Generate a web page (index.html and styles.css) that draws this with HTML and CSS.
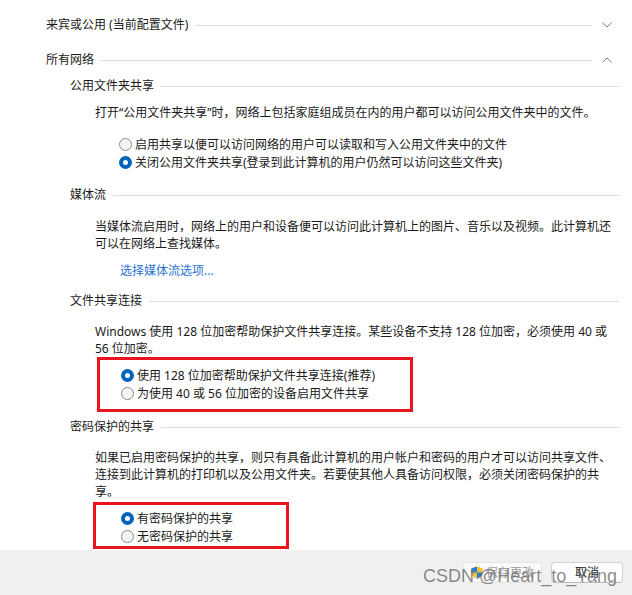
FILE: index.html
```html
<!DOCTYPE html>
<html lang="zh-CN">
<head>
<meta charset="utf-8">
<title>高级共享设置</title>
<link rel="stylesheet" href="styles.css">
</head>
<body>
<div class="panel">
  <div class="sec-head">
    <span class="title">来宾或公用 (当前配置文件)</span>
    <span class="rule"></span>
    <svg class="chev" viewBox="0 0 10 6"><polyline points="0.5,0.8 5,5 9.5,0.8"/></svg>
  </div>
  <div class="sec-head second">
    <span class="title">所有网络</span>
    <span class="rule"></span>
    <svg class="chev" viewBox="0 0 10 6"><polyline points="0.5,5.2 5,1 9.5,5.2"/></svg>
  </div>

  <div class="sub-head s1"><span class="title">公用文件夹共享</span><span class="rule"></span></div>
  <div class="body">
    <p class="desc d1">打开“公用文件夹共享”时，网络上包括家庭组成员在内的用户都可以访问公用文件夹中的文件。</p>
    <div class="radios r1">
      <div class="radio"><span class="dot"></span>启用共享以便可以访问网络的用户可以读取和写入公用文件夹中的文件</div>
      <div class="radio checked"><span class="dot"></span>关闭公用文件夹共享(登录到此计算机的用户仍然可以访问这些文件夹)</div>
    </div>
  </div>

  <div class="sub-head s2"><span class="title">媒体流</span><span class="rule"></span></div>
  <div class="body">
    <p class="desc d2">当媒体流启用时，网络上的用户和设备便可以访问此计算机上的图片、音乐以及视频。此计算机还<br>可以在网络上查找媒体。</p>
    <a class="link" href="#">选择媒体流选项...</a>
  </div>

  <div class="sub-head s3"><span class="title">文件共享连接</span><span class="rule"></span></div>
  <div class="body">
    <p class="desc d3">Windows 使用 128 位加密帮助保护文件共享连接。某些设备不支持 128 位加密，必须使用 40 或<br>56 位加密。</p>
    <div class="mark m1">
      <div class="radio checked"><span class="dot"></span>使用 128 位加密帮助保护文件共享连接(推荐)</div>
      <div class="radio"><span class="dot"></span>为使用 40 或 56 位加密的设备启用文件共享</div>
    </div>
  </div>

  <div class="sub-head s4"><span class="title">密码保护的共享</span><span class="rule"></span></div>
  <div class="body">
    <p class="desc d4">如果已启用密码保护的共享，则只有具备此计算机的用户帐户和密码的用户才可以访问共享文件、<br>连接到此计算机的打印机以及公用文件夹。若要使其他人具备访问权限，必须关闭密码保护的共<br>享。</p>
    <div class="mark m2">
      <div class="radio checked"><span class="dot"></span>有密码保护的共享</div>
      <div class="radio"><span class="dot"></span>无密码保护的共享</div>
    </div>
  </div>
</div>

<div class="footer">
  <div class="btn save">
    <svg class="shield" viewBox="0 0 12 13">
      <defs><clipPath id="sh"><path d="M6 0.5 L11.5 2.2 V6.5 C11.5 9.5 9 11.6 6 12.7 C3 11.6 0.5 9.5 0.5 6.5 V2.2 Z"/></clipPath></defs>
      <g clip-path="url(#sh)">
        <rect x="0" y="0" width="12" height="13" fill="#f2c12e"/>
        <rect x="0" y="0" width="6" height="6.5" fill="#2f7fd8"/>
        <rect x="6" y="6.5" width="6" height="6.5" fill="#2f7fd8"/>
      </g>
    </svg>
    <span>保存更改</span>
  </div>
  <div class="btn cancel">取消</div>
  <div class="watermark">CSDN @Heart_to_Yang</div>
</div>
</body>
</html>
```
FILE: styles.css
```css
* { box-sizing: border-box; }

html, body {
  margin: 0;
  padding: 0;
}

body {
  width: 632px;
  height: 595px;
  overflow: hidden;
  background: #ffffff;
  font-family: "Noto Sans", "Noto Sans CJK SC", sans-serif;
  font-size: 12px;
  color: #1a1a1a;
}

.panel {
  height: 550px;
  padding-top: 15px;
  overflow: hidden;
}

.title {
  white-space: nowrap;
  line-height: 20px;
}

.rule {
  flex: 1;
  height: 1px;
  background: #dedede;
  margin-left: 7px;
}

.sec-head {
  display: flex;
  align-items: center;
  height: 20px;
  padding-left: 46px;
  padding-right: 20px;
}

.sec-head .rule {
  margin-right: 10px;
}

.sec-head.second { margin-top: 15px; }

.chev {
  width: 10px;
  height: 6px;
  flex: none;
}

.chev polyline {
  fill: none;
  stroke: #7a7a7a;
  stroke-width: 1;
}

.sub-head {
  display: flex;
  align-items: center;
  height: 20px;
  padding-left: 70px;
  padding-right: 13px;
}

.s1 { margin-top: 6px; }
.s2 { margin-top: 14px; }
.s3 { margin-top: 12px; }
.s4 { margin-top: 5px; }

.body {
  padding-left: 95px;
}

.desc {
  margin: 0;
  line-height: 17px;
  white-space: nowrap;
}

.d1 { margin-top: 8px; }
.d2 { margin-top: 13px; }
.d3 { margin-top: 12px; }
.d4 { margin-top: 12px; }

.radios.r1 {
  margin-top: 14px;
  padding-left: 24px;
}

.radio {
  display: flex;
  align-items: center;
  height: 18px;
  white-space: nowrap;
}

.dot {
  width: 13px;
  height: 13px;
  border-radius: 50%;
  border: 1px solid #8a8a8a;
  background: #f4f4f4;
  margin-right: 3px;
  flex: none;
}

.checked .dot {
  border: 4px solid #0063bb;
  background: #ffffff;
}

.link {
  display: block;
  margin-top: 10px;
  margin-left: 25px;
  line-height: 17px;
  color: #2a73d2;
  text-decoration: none;
}

.mark {
  border: 3px solid #e8141f;
}

.m1 {
  margin-left: 2px;
  width: 316px;
  padding: 6px 0 7px 21px;
}

.m2 {
  margin-top: 2px;
  margin-left: -2px;
  width: 196px;
  padding: 4px 0 1px 25px;
}

.footer {
  position: relative;
  height: 45px;
  background: #f0f0f0;
  display: flex;
  justify-content: flex-end;
  align-items: flex-start;
  gap: 9px;
  padding-top: 12px;
  padding-right: 9px;
}

.btn {
  height: 21px;
  border-radius: 4px;
  display: flex;
  align-items: center;
  justify-content: center;
  font-size: 12px;
  line-height: 17px;
}

.save {
  width: 79px;
  background: #fafafa;
  border: 1px solid #e4e4e4;
  color: #9e9e9e;
  gap: 3px;
}

.shield {
  width: 12px;
  height: 13px;
}

.cancel {
  width: 72px;
  background: #ffffff;
  border: 1px solid #d3d3d3;
  border-bottom-color: #bcbcbc;
  color: #1a1a1a;
}

.watermark {
  position: absolute;
  right: 15px;
  top: 17px;
  font-family: "Liberation Sans", Arial, sans-serif;
  font-size: 18px;
  line-height: 18px;
  color: rgba(105, 105, 105, 0.78);
  white-space: nowrap;
}
```
